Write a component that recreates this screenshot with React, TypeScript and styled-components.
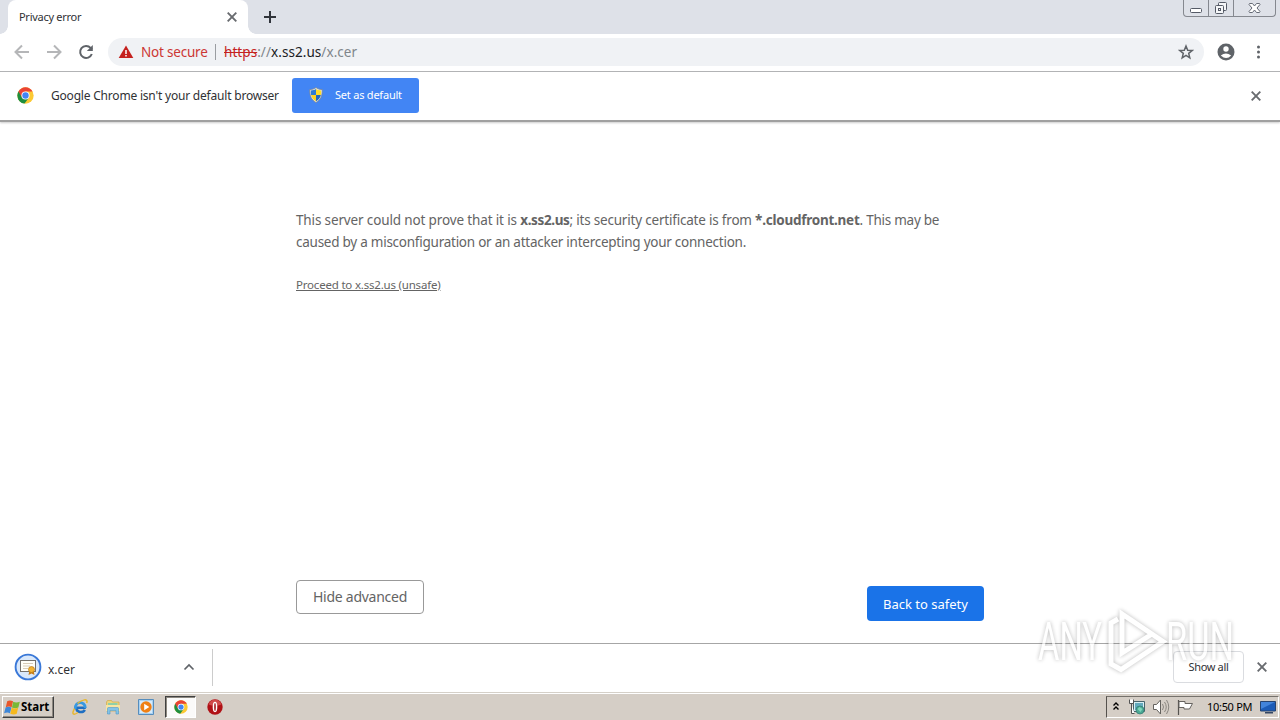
import React from "react";
import styled, { createGlobalStyle } from "styled-components";

const GlobalStyle = createGlobalStyle`
  * {
    box-sizing: border-box;
  }

  body {
    margin: 0;
    overflow: hidden;
    background: #fff;
    font-family: "Noto Sans", "Open Sans", sans-serif;
  }

  button {
    font-family: inherit;
    padding: 0;
    border: 0;
    background: none;
  }

  svg {
    display: block;
    flex: none;
  }
`;

const Screen = styled.div`
  position: relative;
  display: flex;
  flex-direction: column;
  width: 1280px;
  height: 720px;
  overflow: hidden;
  background: #fff;
`;

const Label = styled.span<{ $size: number; $spacing?: number; $color?: string }>`
  font-size: ${(p) => p.$size}px;
  letter-spacing: ${(p) => p.$spacing ?? 0}px;
  color: ${(p) => p.$color ?? "#303134"};
  line-height: 18px;
  white-space: pre;
`;

const TabStrip = styled.div`
  display: flex;
  height: 34px;
  padding-left: 8px;
  background: #dee1e8;
`;

const Tab = styled.div`
  position: relative;
  display: flex;
  align-items: center;
  justify-content: space-between;
  width: 240px;
  height: 34px;
  padding: 0 10px 0 11px;
  border-radius: 8px 8px 0 0;
  background: #fff;

  &::before,
  &::after {
    content: "";
    position: absolute;
    bottom: 0;
    width: 8px;
    height: 8px;
  }
  &::before {
    left: -8px;
    background: radial-gradient(circle at 0 0, #dee1e8 7.5px, #fff 8px);
  }
  &::after {
    right: -8px;
    background: radial-gradient(circle at 100% 0, #dee1e8 7.5px, #fff 8px);
  }
`;

const NewTab = styled.div`
  padding: 11px 0 0 16px;
`;

const WindowButtons = styled.div`
  display: flex;
  width: 93px;
  height: 17px;
  margin: 0 4px 0 auto;
  border: 1px solid #85888f;
  border-top: 0;
  border-radius: 0 0 4px 4px;
`;

const WindowButton = styled.div<{ $width: number }>`
  width: ${(p) => p.$width}px;
  height: 16px;
  border-right: 1px solid #85888f;

  &:last-child {
    border-right: 0;
  }
`;

const Toolbar = styled.div`
  display: flex;
  align-items: center;
  height: 38px;
  padding: 0 14px 1px;
  border-bottom: 1px solid #b0b1b3;
`;

const NavIcons = styled.div`
  display: flex;
  gap: 16px;
  width: 94px;
`;

const AddressBar = styled.div`
  display: flex;
  align-items: center;
  width: 1096px;
  height: 28px;
  padding: 0 10px;
  border-radius: 14px;
  background: #f0f2f5;

  > svg:last-child {
    margin-left: auto;
  }
`;

const Warning = styled.div`
  display: flex;
  align-items: center;
  width: 98px;
  gap: 7px;
`;

const Separator = styled.i`
  width: 1px;
  height: 16px;
  margin-right: 8px;
  margin-left: -1px;
  background: #9a9da1;
`;

const Scheme = styled.span`
  color: #c5221f;
  text-decoration: line-through;
`;

const Host = styled.span`
  color: #202124;
`;

const ToolbarActions = styled.div`
  display: flex;
  align-items: center;
  gap: 14px;
  margin-left: 12px;
`;

const InfoBar = styled.div`
  display: flex;
  align-items: center;
  height: 50px;
  padding: 0 18px 1px 17px;
  border-bottom: 2px solid #a0a0a0;
  box-shadow: 0 1px 2px #ccc;

  > svg:last-child {
    margin-left: auto;
  }
`;

const InfoText = styled.div`
  width: 241px;
  margin-left: 17px;
  padding-bottom: 3px;
`;

const DefaultButton = styled.button`
  display: flex;
  align-items: center;
  gap: 12px;
  width: 127px;
  height: 35px;
  padding: 0 0 1px 17px;
  border-radius: 3px;
  background: #4285f4;
`;

const Page = styled.main`
  display: flex;
  flex-direction: column;
  width: 688px;
  height: 521px;
  margin: 0 auto;
  padding-top: 87px;
  color: #646464;
`;

const Message = styled.p`
  margin: 0;
  font-size: 13.5px;
  line-height: 22px;
  white-space: nowrap;
`;

const Run = styled.span<{ $spacing: number }>`
  letter-spacing: ${(p) => p.$spacing}px;
`;

const Strong = styled.b<{ $spacing: number }>`
  letter-spacing: ${(p) => p.$spacing}px;
`;

const Proceed = styled.a`
  align-self: flex-start;
  margin-top: 23px;
  font-size: 11.5px;
  line-height: 18px;
  letter-spacing: -0.2px;
  text-decoration: underline;
`;

const Actions = styled.div`
  display: flex;
  align-items: flex-start;
  justify-content: space-between;
  margin-top: auto;
  height: 63px;
`;

const HideButton = styled.button`
  width: 128px;
  height: 34px;
  border: 1px solid #999;
  border-radius: 4px;
`;

const SafetyButton = styled.button`
  width: 117px;
  height: 35px;
  margin-top: 6px;
  border-radius: 4px;
  background: #1a73e8;
`;

const Shelf = styled.div`
  display: flex;
  align-items: center;
  height: 49px;
  padding: 0 12px 2px 0;
  border-top: 1px solid #a6a6a6;
`;

const Download = styled.div`
  display: flex;
  align-items: center;
  justify-content: space-between;
  width: 213px;
  height: 37px;
  padding: 0 17px 0 14px;
  border-right: 1px solid #ccc;
`;

const FileName = styled.div`
  display: flex;
  align-items: center;
  gap: 6px;

  span {
    padding-top: 5px;
  }
`;

const ShowAll = styled.button`
  width: 71px;
  height: 32px;
  margin: 0 12px 0 auto;
  padding-bottom: 1px;
  border: 1px solid #dadce0;
  border-radius: 4px;
`;

const TaskBar = styled.footer`
  display: flex;
  align-items: center;
  height: 28px;
  padding: 1px 0 0 2px;
  border-top: 1px solid #d5d0c8;
  background: #d5cec6;
  box-shadow: inset 0 1px #fff;
`;

const StartButton = styled.button`
  display: flex;
  align-items: center;
  width: 52px;
  height: 22px;
  padding-left: 1px;
  border: 1px solid;
  border-color: #fff #404040 #404040 #fff;
  box-shadow: inset -1px -1px #8d8880;
  background: #d5cec6;
`;

const QuickLaunch = styled.div`
  display: flex;
  align-items: center;
  margin-left: 18px;

  > svg {
    margin-right: 17px;
  }
`;

const ActiveTask = styled.div`
  display: flex;
  align-items: center;
  justify-content: center;
  width: 31px;
  height: 22px;
  margin: 0 11px 0 -6px;
  border: 1px solid;
  border-color: #404040 #fff #fff #404040;
  box-shadow: inset 1px 1px #8d8880;
  background: #fbfaf9;
`;

const Tray = styled.div`
  display: flex;
  align-items: center;
  width: 173px;
  height: 22px;
  margin: 0 1px 0 auto;
  padding-left: 5px;
  border: 1px solid;
  border-color: #75716b #fff #fff #55514d;

  > span {
    width: 53px;
    margin-left: 13px;
  }
`;

const Watermark = styled.div`
  position: absolute;
  left: 1036px;
  top: 608px;
  filter: drop-shadow(0 0 2px rgba(0, 0, 0, 0.42));
  opacity: 0.65;
`;

const MarkText = styled.text`
  font-family: Roboto, sans-serif;
  font-size: 53px;
  font-weight: 400;
  fill: #fff;
  stroke: none;
`;

function CloseIcon({ size = 12, color = "#686b6f" }: { size?: number; color?: string }) {
  return (
    <svg width={size} height={size} viewBox="0 0 12 12" fill="none" stroke={color} strokeWidth="1.900">
      <path d="M1.700 1.700l8.600 8.600M10.300 1.700l-8.600 8.600" />
    </svg>
  );
}

function Arrow({ right }: { right?: boolean }) {
  return (
    <svg width="16" height="16" viewBox="0 0 16 16" fill="none" stroke="#b5b6b8" strokeWidth="2">
      <path d={right ? "M1 8h13M8 1.5L14.5 8 8 14.5" : "M15 8H2M8 1.5L1.5 8 8 14.5"} />
    </svg>
  );
}

function ChromeLogo({ size }: { size: number }) {
  return (
    <svg width={size} height={size} viewBox="0 0 48 48">
      <circle cx="24" cy="24" r="23" fill="#fcc934" />
      <path d="M24 24L4.1 12.5a23 23 0 0 0 17.2 34.3L34 29.8z" fill="#1e8e3e" />
      <path d="M4.1 12.5a23 23 0 0 1 39.8 0H24L14 29.8z" fill="#ea4335" />
      <circle cx="24" cy="24" r="11.5" fill="#fff" />
      <circle cx="24" cy="24" r="9" fill="#4285f4" />
    </svg>
  );
}

function Shield() {
  return (
    <svg width="14" height="16" viewBox="0 0 14 16">
      <path d="M7 .5C5 2 3 2.5.8 2.5.5 9 2.5 13 7 15.5 11.5 13 13.500 9 13.200 2.500 11 2.500 9 2 7 .5z" fill="#dfe5e9" stroke="#7a8490" strokeWidth=".8" />
      <path d="M7 2v6H2.100C1.800 6.500 1.800 5 1.900 3.500 4 3.400 5.500 3 7 2z" fill="#2e7bd4" />
      <path d="M7 2v6h4.900c.3-1.500.3-3 .2-4.500C10 3.400 8.500 3 7 2z" fill="#ffdc28" />
      <path d="M7 8v6.200C4.200 12.600 2.700 10.500 2.100 8z" fill="#ffd21e" />
      <path d="M7 8v6.200c2.800-1.600 4.300-3.700 4.900-6.200z" fill="#2468bd" />
    </svg>
  );
}

function CertIcon() {
  return (
    <svg width="28" height="28" viewBox="0 0 28 28">
      <circle cx="14" cy="14" r="12.400" fill="#d9e8fb" stroke="#3a78d8" strokeWidth="1.900" />
      <rect x="6.500" y="7.500" width="15" height="11" fill="#fffef8" stroke="#75716c" />
      <path d="M9 10.500h10M9 13h7M9 15.500h5" stroke="#d8ccb8" />
      <path d="M15.500 17l-1 5 3-1.500 3 1.500-1-5z" fill="#c47b19" />
      <circle cx="17.500" cy="16.500" r="3" fill="#f3b333" stroke="#b97816" strokeWidth=".7" />
    </svg>
  );
}

function WindowsFlag() {
  return (
    <svg width="17" height="17" viewBox="0 0 16 16">
      <path d="M3 2.200q2.500-1.600 5.500 0L7.200 7.700q-2.500-1.400-5.500 0z" fill="#e8562a" />
      <path d="M8.700 2.500q2.700 1.500 6.200 0l-1.400 5.500q-2.800 1.400-6 0z" fill="#79b836" />
      <path d="M1.500 8q2.500-1.500 5.500 0l-1.400 5.500q-2.300-1.400-5.500 0z" fill="#3e87d8" />
      <path d="M7.300 8.300q2.800 1.500 6 0L12 13.800q-2.700 1.500-6.100 0z" fill="#f6b91d" />
    </svg>
  );
}

function ExplorerIcon() {
  return (
    <svg width="16" height="16" viewBox="0 0 16 16" fill="none">
      <path d="M13.800 8.800H4.500c-.2 5.200 6.500 5.200 8.300 2" stroke="#1f6fc2" strokeWidth="2.600" />
      <path d="M3.300 10C2.300 2 13.300 1.500 13.300 9" stroke="#3799e2" strokeWidth="2.800" />
      <path d="M2.500 9.600C-.8 15.400 1.500 16.500 6 13.500M5.500 4.500C10 .5 16.500-1 14.700 4" stroke="#e8b72e" strokeWidth="1.500" />
    </svg>
  );
}

function FolderIcon() {
  return (
    <svg width="16" height="16" viewBox="0 0 16 16">
      <path d="M1.500 3l1-1.500h4L7.500 3H14v9H1.500z" fill="#efd47c" stroke="#cfaa4b" strokeWidth=".7" />
      <path d="M3 4h9.500v2H3z" fill="#8fd0a8" />
      <path d="M1 6h14v6H1z" fill="#f8e5a2" />
      <path d="M2.500 15V9.500q0-1 1-1h9q1 0 1 1V15H11v-3.500H5V15z" fill="#83c3e8" stroke="#4f99c8" strokeWidth=".6" />
    </svg>
  );
}

function PlayerIcon() {
  return (
    <svg width="16" height="16" viewBox="0 0 16 16">
      <path d="M.5.500h15v15H.5z" fill="#a9d2f2" stroke="#568dbd" />
      <path d="M2 2h12v12H2z" fill="#d6ebfb" />
      <circle cx="8" cy="8" r="5.700" fill="#ef8015" />
      <path d="M6.200 4.800v6.400L11.300 8z" fill="#fff" />
    </svg>
  );
}

function OperaIcon() {
  return (
    <svg width="16" height="16" viewBox="0 0 16 16">
      <circle cx="8" cy="8" r="7.700" fill="#b01116" />
      <path d="M1.500 5.500a6.800 6.800 0 0 1 13 0Q8 8 1.500 5.500z" fill="#d04a4a" />
      <ellipse cx="8" cy="8" rx="2.300" ry="5.200" fill="#fff" />
      <ellipse cx="8" cy="8" rx=".8" ry="4" fill="#a01015" />
    </svg>
  );
}

// chevrons, network, speaker, action center flag
function TrayIcons() {
  return (
    <svg width="82" height="18" viewBox="0 0 82 18" fill="none">
      <path d="M1.500 7.500l2.500-2.500 2.500 2.500M1.500 11.500L4 9l2.500 2.500" stroke="#000" strokeWidth="1.400" />
      <path d="M21.500 3.500h11v10h-11z" fill="#d8eef3" stroke="#47636b" />
      <path d="M23 5h8v7h-8z" fill="#63aabd" />
      <circle cx="28" cy="12" r="4" fill="#4ba994" stroke="#307871" strokeWidth=".7" />
      <path d="M25.500 11l2-2 3 2-2 3z" fill="#80d6bc" />
      <path d="M17.500 1.500v4h4v-4M19.500 5.500v10h3" fill="#fff" stroke="#535353" />
      <path d="M41.500 6.500h3l4-4.500v14l-4-4.500h-3z" fill="#fff" stroke="#64625e" />
      <path d="M50.500 6q2 3 0 6M52.500 4q3.500 5 0 10M54.500 2q4.500 7 0 14" stroke="#8a8680" />
      <path d="M66.500 2v15" stroke="#55534f" strokeWidth="1.200" />
      <path d="M67 3.500h6v2h7.500l-3 5.500H72V9.500h-5z" fill="#fff" stroke="#66635f" />
    </svg>
  );
}

function DesktopIcon() {
  return (
    <svg width="16" height="16" viewBox="0 0 16 16">
      <path d="M.5 2.500h15v9.500H.5z" fill="#1d5cb7" stroke="#28446f" />
      <path d="M1 3h14L1 10z" fill="#4384da" />
      <path d="M5 13h8v1.500H5z" fill="#344764" />
    </svg>
  );
}

function AnyRunMark() {
  return (
    <svg width="200" height="66" viewBox="0 0 200 66" fill="none" stroke="#fff">
      <MarkText x="2" y="52" textLength="64" lengthAdjust="spacingAndGlyphs">
        ANY
      </MarkText>
      <MarkText x="130" y="52" textLength="68" lengthAdjust="spacingAndGlyphs">
        RUN
      </MarkText>
      <path d="M82 11l-7 4v41l10 5.500 42-28-41-27.500v39l30-19" strokeWidth="5" />
    </svg>
  );
}

function App() {
  return (
    <Screen>
      <GlobalStyle />
      <TabStrip>
        <Tab>
          <Label $size={11} $spacing={-0.28}>Privacy error</Label>
          <CloseIcon />
        </Tab>
        <NewTab>
          <svg width="12" height="12" viewBox="0 0 12 12" stroke="#30343b" strokeWidth="2">
            <path d="M0 6h12M6 0v12" />
          </svg>
        </NewTab>
        <WindowButtons>
          <WindowButton $width={25}>
            <svg width="24" height="16" viewBox="0 0 24 16">
              <rect x="6.500" y="8.500" width="11" height="4" rx="1" fill="#fff" stroke="#555a66" />
            </svg>
          </WindowButton>
          <WindowButton $width={25}>
            <svg width="24" height="16" viewBox="0 0 24 16" stroke="#555a66" fill="#f5f6f8">
              <rect x="9.500" y="2.500" width="8" height="8" rx="1" />
              <rect x="6.500" y="5.500" width="8" height="8" rx="1" />
              <rect x="9.500" y="8.500" width="2" height="2" />
            </svg>
          </WindowButton>
          <WindowButton $width={41}>
            <svg width="40" height="16" viewBox="0 0 40 16">
              <path d="M15.500 3.500h3l2 2.500 2-2.500h3l.5 1-3 3.500 3 3.500-.5 1h-3l-2-2.500-2 2.500h-3l-.5-1 3-3.500-3-3.500z" fill="#fff" stroke="#666b76" />
            </svg>
          </WindowButton>
        </WindowButtons>
      </TabStrip>
      <Toolbar>
        <NavIcons>
          <Arrow />
          <Arrow right />
          <svg width="16" height="16" viewBox="0 0 16 16" fill="none" stroke="#5f6368" strokeWidth="2">
            <path d="M13.800 10a6 6 0 1 1-1.200-6.100L14 5.300" />
            <path d="M14.800 1v6H8.800z" fill="#5f6368" stroke="none" />
          </svg>
        </NavIcons>
        <AddressBar>
          <Warning>
            <svg width="16" height="16" viewBox="0 0 16 16">
              <path d="M8 1.500L15.300 14H.7z" fill="#c5221f" />
              <path d="M8 6v4M8 11v1.500" stroke="#fff" strokeWidth="1.500" />
            </svg>
            <Label $size={13.5} $spacing={-0.2} $color="#cc3734">Not secure</Label>
          </Warning>
          <Separator />
          <Label $size={13.5} $spacing={0.06} $color="#80868b">
            <Scheme>https</Scheme>://<Host>x.ss2.us</Host>/x.cer
          </Label>
          <svg width="16" height="16" viewBox="0 0 16 16" fill="none" stroke="#5f6368" strokeWidth="1.500">
            <path d="M8 2l1.700 4.200 4.500.3-3.500 2.900 1.100 4.400L8 11.400l-3.800 2.400 1.100-4.400L1.800 6.500l4.500-.3z" />
          </svg>
        </AddressBar>
        <ToolbarActions>
          <svg width="20" height="20" viewBox="0 0 20 20">
            <circle cx="10" cy="10" r="8.500" fill="#5f6368" />
            <circle cx="10" cy="7" r="2.700" fill="#fff" />
            <path d="M4.800 13.500q5-4 10.400 0-5 5-10.400 0z" fill="#fff" />
          </svg>
          <svg width="16" height="16" viewBox="0 0 16 16" fill="#5f6368">
            <circle cx="8.500" cy="3" r="1.500" />
            <circle cx="8.500" cy="8" r="1.500" />
            <circle cx="8.500" cy="13" r="1.500" />
          </svg>
        </ToolbarActions>
      </Toolbar>
      <InfoBar>
        <ChromeLogo size={17} />
        <InfoText>
          <Label $size={12} $spacing={-0.2}>Google Chrome isn't your default browser</Label>
        </InfoText>
        <DefaultButton>
          <Shield />
          <Label $size={11} $spacing={-0.22} $color="#fff">Set as default</Label>
        </DefaultButton>
        <CloseIcon />
      </InfoBar>
      <Page>
        <Message>
          <Run $spacing={-0.14}>This server could not prove that it is </Run>
          <Strong $spacing={-0.37}>x.ss2.us</Strong>
          <Run $spacing={-0.2}>; its security certificate is from </Run>
          <Strong $spacing={-0.25}>*.cloudfront.net</Strong>
          <Run $spacing={-0.25}>. This may be</Run>
          <br />
          <Run $spacing={-0.25}>caused by a misconfiguration or an attacker intercepting your connection.</Run>
        </Message>
        <Proceed>Proceed to x.ss2.us (unsafe)</Proceed>
        <Actions>
          <HideButton>
            <Label $size={14} $spacing={-0.25} $color="#646464">Hide advanced</Label>
          </HideButton>
          <SafetyButton>
            <Label $size={13} $color="#fff">Back to safety</Label>
          </SafetyButton>
        </Actions>
      </Page>
      <Shelf>
        <Download>
          <FileName>
            <CertIcon />
            <Label $size={12}>x.cer</Label>
          </FileName>
          <svg width="12" height="12" viewBox="0 0 12 12" fill="none" stroke="#5f6368" strokeWidth="1.700">
            <path d="M1.500 8.500L6 4l4.500 4.500" />
          </svg>
        </Download>
        <ShowAll>
          <Label $size={11} $spacing={-0.35}>Show all</Label>
        </ShowAll>
        <CloseIcon />
      </Shelf>
      <TaskBar>
        <StartButton>
          <WindowsFlag />
          <Label $size={11.5} $color="#000">
            <b>Start</b>
          </Label>
        </StartButton>
        <QuickLaunch>
          <ExplorerIcon />
          <FolderIcon />
          <PlayerIcon />
          <ActiveTask>
            <ChromeLogo size={14} />
          </ActiveTask>
          <OperaIcon />
        </QuickLaunch>
        <Tray>
          <TrayIcons />
          <Label $size={11} $spacing={-0.3} $color="#000">10:50 PM</Label>
          <DesktopIcon />
        </Tray>
      </TaskBar>
      <Watermark>
        <AnyRunMark />
      </Watermark>
    </Screen>
  );
}

export default App;
